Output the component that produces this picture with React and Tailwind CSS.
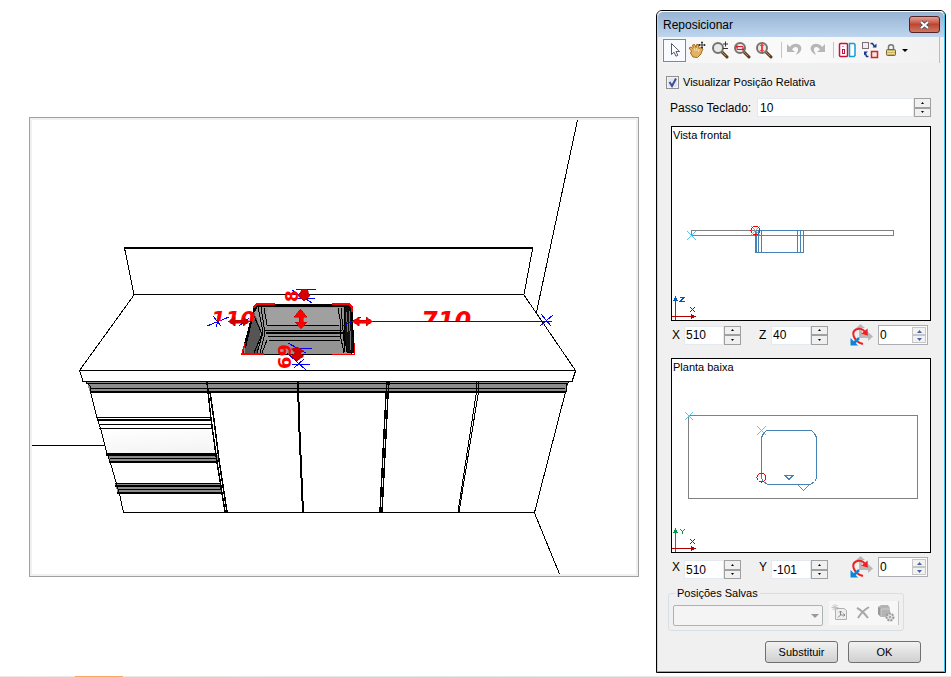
import { useState } from "react";

const Icon = ({ children }) => (
  <svg width="18" height="18" viewBox="0 0 18 18" fill="none" aria-hidden="true">
    {children}
  </svg>
);

const Lens = ({ children }) => (
  <Icon>
    <path d="M11 11l5 5" stroke="#5b3d22" strokeWidth="3" strokeLinecap="round" />
    <path d="M11 11l4 4" stroke="#a98a63" strokeWidth="1" />
    <circle cx="7" cy="7" r="5" fill="#e4eaea" stroke="#77736c" strokeWidth="2" />
    {children}
  </Icon>
);

const tools = [
  {
    name: "Mover",
    icon: (
      <Lens>
        <path d="M12 3h5M14.500 0.500v5M12 7.500h5" stroke="#333" />
      </Lens>
    ),
  },
  {
    name: "Zoom janela",
    icon: (
      <Lens>
        <path d="M4 5.500h6v3H4z" fill="#f3d5d5" stroke="#d02030" />
        <path d="M3 5.500h2M9 8.500h2" stroke="#d02030" strokeWidth="2" />
      </Lens>
    ),
  },
  {
    name: "Zoom total",
    icon: (
      <Lens>
        <path d="M7 2.500l2.500 2.500H8v4h1.500L7 11.500 4.500 9H6V5H4.500z" fill="#f04040" />
      </Lens>
    ),
  },
];

const ToolButton = ({ name, children }) => (
  <button aria-label={name} className="flex h-[23px] w-[22px] items-center justify-center">
    {children}
  </button>
);

const Separator = () => <span className="h-4 w-px bg-[#c4c4c4]" />;

const Toolbar = () => (
  <div className="mx-1 flex h-[26px] items-center border-r border-[#bdbdbd] bg-linear-to-r from-[#f5f5f5] via-[#fafafa] to-[#f1f1f1] pl-px">
    <button
      aria-label="Selecionar"
      className="flex h-[23px] w-[23px] items-center justify-center border border-[#3399ff] bg-[#f8fbff]"
    >
      <Icon>
        <path
          d="M5.500 2.500v11l2.600-2.300 1.800 4 1.900-.9-1.800-3.800h3.600z"
          fill="#fff"
          stroke="#5a5a68"
        />
      </Icon>
    </button>
    <ToolButton name="Arrastar">
      <Icon>
        <path
          d="M1 7l2-1 2.500 2-1-4L6.500 3.500 8 6.500l.5-3 2 0 .5 4 2-1L15 8l-1.500 3-.5 2-3.500 3.500-4.500-.5L2.500 12l1-2z"
          fill="#e3b365"
          stroke="#a36d20"
        />
        <path d="M5.500 7l2 3M8.500 7l.5 3M11 8l-.5 3" stroke="#f8dda8" />
        <path d="M14 .5v7M10.500 4h7M13 1.500h2M13 6.500h2M11.500 3v2M16.500 3v2" stroke="#333" />
      </Icon>
    </ToolButton>
    <div className="ml-px flex items-center">
      {tools.map((tool) => (
        <ToolButton key={tool.name} name={tool.name}>
          {tool.icon}
        </ToolButton>
      ))}
    </div>
    <div className="ml-1.5 flex items-center">
      <Separator />
      <span className="w-px" />
      <ToolButton name="Desfazer">
        <Icon>
          <path d="M2 3v8h8L7 8.500C10 4 14 6 13 9.500L11 14c6-3 7-8 3-10.500C11 2 7 3 4.800 6z" fill="#b7b7b7" />
        </Icon>
      </ToolButton>
      <span className="w-0.5" />
      <ToolButton name="Refazer">
        <Icon>
          <path d="M16 3v8H8l3-2.500C8 4 4 6 5 9.500L7 14C1 11 0 6 4 3.500 7 2 11 3 13.200 6z" fill="#b7b7b7" />
        </Icon>
      </ToolButton>
    </div>
    <div className="ml-1 flex items-center">
      <Separator />
      <span className="w-0.5" />
      <ToolButton name="Espelhar">
        <Icon>
          <rect x="1.500" y="2.500" width="8" height="13" rx="1" fill="#fff" stroke="#c8103e" strokeWidth="1.500" />
          <path d="M5 5v1M5 13v0" stroke="#c8103e" />
          <rect x="4.500" y="8.500" width="2" height="4" stroke="#c8103e" />
          <path d="M11.500 2.500H16l1 1v11l-1 1h-4.500z" fill="#fff" stroke="#159bd7" strokeWidth="1.500" />
        </Icon>
      </ToolButton>
      <span className="w-px" />
      <ToolButton name="Trocar">
        <Icon>
          <rect x="1.500" y="1.500" width="6" height="6" fill="#eee" stroke="#7b6e75" />
          <rect x="10.500" y="10.500" width="6" height="6" fill="#f4e8e8" stroke="#e02020" strokeWidth="1.500" />
          <path d="M9.500 2.500h2l2 3M7.500 15.500h-2l-1-3" stroke="#173a8c" strokeWidth="1.500" />
          <path d="M11.500 6.500h4v-4zM3 14.500v-4h4z" fill="#173a8c" />
        </Icon>
      </ToolButton>
      <span className="w-px" />
      <button aria-label="Bloquear" className="flex h-[23px] items-center gap-0.5">
        <Icon>
          <path d="M6.500 9V6c0-3 5-3 5 0v3" stroke="#777" strokeWidth="1.500" />
          <rect x="4.500" y="8.500" width="9" height="6" rx="1" fill="#c8b46a" stroke="#776a3a" />
          <path d="M5 10.500h8M5 12.500h8" stroke="#e8dba5" />
        </Icon>
        <span className="border-x-[3px] border-t-[3px] border-x-transparent border-t-black" />
      </button>
    </div>
  </div>
);

const Arrow = ({ down, blue }) => (
  <svg
    width={blue ? 5 : 3}
    height={blue ? 3 : 2}
    viewBox="0 0 5 3"
    preserveAspectRatio="none"
    aria-hidden="true"
  >
    <path d={down ? "M0 0h5L2.500 3z" : "M0 3h5L2.500 0z"} fill={blue ? "#4a62a8" : "#000"} />
  </svg>
);

const NumberField = ({ label, value, className, inputClass }) => {
  const [text, setText] = useState(value);
  const step = (delta) => setText(String(Number(text) + delta));

  return (
    <div className={`flex h-[19px] ${className}`}>
      <input
        aria-label={label}
        value={text}
        onChange={(e) => setText(e.target.value)}
        className={`min-w-0 flex-1 border border-[#e3e9ef] bg-white text-[12px] outline-none ${inputClass}`}
      />
      <div className="flex w-[17px] shrink-0 flex-col">
        <button
          aria-label={`Aumentar ${label}`}
          onClick={() => step(1)}
          className="flex flex-1 items-center justify-center border border-[#a0a0a0] bg-[#f0f0f0]"
        >
          <Arrow />
        </button>
        <button
          aria-label={`Diminuir ${label}`}
          onClick={() => step(-1)}
          className="flex flex-1 items-center justify-center border border-[#a0a0a0] bg-[#f0f0f0]"
        >
          <Arrow down />
        </button>
      </div>
    </div>
  );
};

const RotationField = ({ label }) => {
  const [text, setText] = useState("0");
  const step = (delta) => setText(String(Number(text) + delta));

  return (
    <div className="flex items-center gap-1">
      <svg width="24" height="22" viewBox="0 0 24 22" aria-hidden="true">
        <path d="M9 4h-3l4.500-4L15 4h-3v7h6V8l5 4.500-5 4.500v-3h-9z" fill="#b9b9b9" />
        <path d="M13 20C3 17 1 8 6 5.500c3-1.500 7-1 9 2.500" fill="none" stroke="#ee2222" strokeWidth="2" />
        <path d="M17.500 4.500l.5 7-7-1.500z" fill="#ee2222" />
        <path d="M9 14l-5 5" stroke="#0a86d8" strokeWidth="2.500" />
        <path d="M.5 14v7.500H8z" fill="#0a86d8" />
      </svg>
      <div className="flex h-5 w-[50px] border border-[#abadb3] bg-white p-px">
        <input
          aria-label={label}
          value={text}
          onChange={(e) => setText(e.target.value)}
          className="min-w-0 flex-1 bg-white text-[12px] leading-4 outline-none"
        />
        <div className="flex w-[14px] flex-col">
          <button
            aria-label={`Aumentar ${label}`}
            onClick={() => step(1)}
            className="flex flex-1 items-center justify-center border border-[#c6c6c6] bg-[#f2f2f2]"
          >
            <Arrow blue />
          </button>
          <button
            aria-label={`Diminuir ${label}`}
            onClick={() => step(-1)}
            className="flex flex-1 items-center justify-center border border-[#c6c6c6] bg-[#f2f2f2]"
          >
            <Arrow down blue />
          </button>
        </div>
      </div>
    </div>
  );
};

const FrontView = () => (
  <svg viewBox="672 143 258 177" className="block h-auto w-full" fill="none" shapeRendering="crispEdges">
    <rect x="691.500" y="230.500" width="202" height="5" stroke="#808080" />
    <path d="M755.500 230.500h48v22h-48zM756.500 231v21M758.500 231v21M761.500 231v21M797.500 231v21M800.500 231v21" stroke="#4682b4" />
    <path d="M687 231l9 9M696 231l-9 9M751 226l9 9M760 226l-9 9" stroke="#5bc5ee" />
    <circle cx="755.500" cy="230.500" r="4.500" stroke="#f00" />
    <path d="M675.500 320v-21" stroke="#0057b7" />
    <path d="M673 301h5l-2.500-5z" fill="#0057b7" />
    <path d="M680 297.500h4l-4 4h5" stroke="#0057b7" />
    <path d="M672 316.500h20" stroke="#b00000" />
    <path d="M691 314v5l5-2.500z" fill="#b00000" />
    <path d="M690 307l5 5M695 307l-5 5" stroke="#b00000" />
  </svg>
);

const PlanView = () => (
  <svg viewBox="672 375 258 177" className="block h-auto w-full" fill="none" shapeRendering="crispEdges">
    <rect x="688.500" y="415.500" width="229" height="83" stroke="#808080" />
    <path d="M798 485l5.500 5.500L809 485" stroke="#808080" />
    <path
      d="M766.500 430.500H811.500L814.500 433.500 816.500 437.500V478.500L814.500 481.500 810.500 484.500H767.500L763.500 481.500 761.500 478.500V437.500L763.500 433.500z"
      stroke="#4682b4"
    />
    <path d="M785 475.500h8l-4 4z" stroke="#4682b4" />
    <path d="M685 412l8 8M693 412l-8 8M757 426l9 9M766 426l-9 9" stroke="#5bc5ee" />
    <circle cx="761.500" cy="477.500" r="4.500" stroke="#f00" />
    <path d="M675.500 552v-20" stroke="#009640" />
    <path d="M673 533h5l-2.500-5z" fill="#009640" />
    <path d="M680 529l2.500 2.500L685 529M682.500 531v3" stroke="#009640" />
    <path d="M672 548.500h20" stroke="#b00000" />
    <path d="M691 546v5l5-2.500z" fill="#b00000" />
    <path d="M690 539l5 5M695 539l-5 5" stroke="#b00000" />
  </svg>
);

const Kitchen = () => (
  <svg
    viewBox="32 120 604 454"
    className="block h-auto w-full font-['DejaVu_Sans',sans-serif] font-bold"
    fill="none"
    stroke="#000"
    shapeRendering="crispEdges"
  >
    <defs>
      <clipPath id="aboveLine">
        <rect x="200" y="305" width="300" height="16" />
      </clipPath>
      <linearGradient id="drawer" x1="0" y1="0" x2="0.300" y2="1">
        <stop offset="0" stopColor="#fff" />
        <stop offset="1" stopColor="#f5f5f5" />
      </linearGradient>
    </defs>

    {/* walls */}
    <path d="M577.500 120L536.500 312M32 445.500H105M534.500 513L559.500 574" />
    {/* backsplash and worktop */}
    <path d="M124 248H533" strokeWidth="2" />
    <path d="M124.500 248L134 294.500H524L532.500 249M134 295L79.500 370.500H575.500L524 295" />
    <path d="M79.500 370.500L83 381.500H572L575.500 371" />

    {/* profile under the worktop */}
    <path d="M87 382H569L565 393H90z" fill="#8c8c8c" stroke="none" />
    <path d="M86 383.500H568M90 388.500H565M86 382L90 386V392M569 382L566 386V392" />
    <path d="M90 392H566" strokeWidth="2" />

    {/* drawers */}
    <path d="M101 429H213L217 453H107z" fill="url(#drawer)" stroke="none" />
    <path d="M108 455h110v7h-109zM115 484h106l1 9h-104z" fill="#8c8c8c" stroke="none" />
    <path d="M90.500 392L97.500 420 100.500 428 106.500 452 110.500 463 116.500 484 119.500 494 123.500 512.500H534.500L565.500 392" />
    <path d="M97 417.500H210M100 424.500H212M99 428.500H212M110 458.500H217M115 483.500H220M119 489.500H221" />
    <path d="M97 420H211M109 462H217M115 486H220M117 493H222" strokeWidth="2" />
    <path d="M106 454H216" strokeWidth="3" />

    {/* gaps between the doors */}
    <path d="M207 382L211 419 217 462 225 512M210 392L214 420 219 460 227 512" strokeWidth="1.500" />
    <path d="M298 382L299 420 303 512" strokeWidth="2" />
    <path d="M387 382L386 395 380 512M389 382L388 395 382 512" strokeWidth="1.500" />
    <path d="M477 382L476 395 458 512M479 382L478 395 459 512" />

    {/* sink */}
    <path d="M258 304H347L352 309 354 350 351 354H244L243 350 254 308z" fill="#949494" />
    <path d="M268 308H337L340 325H265z" fill="#a0a0a0" stroke="none" />
    <path d="M254 312L261 330 257 353H245L245 347z" fill="#555" stroke="none" />
    <path d="M345 306L351 308 354 352H347L344 335z" fill="#111" />
    <path d="M257 305.500H350" strokeWidth="3" />
    <path d="M257 306L253 313 245 348" strokeWidth="2" />
    <path d="M258 307L263 332 257 353M261 307L265 333 260 353M264 308L267 325M254 316L262 334 254 353M267 340L262 353" />
    <path d="M267 325.500H339M265 330.500H342M268 336.500H341M269 340.500H340" />
    <path d="M266 333H343" strokeWidth="2" />
    <path d="M341 308L343 330 345 352M338 308L341 325 340 334 344 353" />
    <path d="M346 312L348 332M349 311L351 350" stroke="#777" />

    <path
      d="M253 308L257 304H275M332 304H349L352 307V312M245 343L242 354H264M332 354.500H354.500V343"
      stroke="#f00"
      strokeWidth="1.500"
    />

    {/* dimension lines */}
    <path
      d="M352 321.500H552M540 326L553 315M541 314L551 326M207 326L229 317M213 316L221 326M219 317L216 327M239 326L249 318M343 326L361 317M296 289.500H316M293 298.500H315M292 290L312 303M288 343L306 353M293 348.500H312M292 364.500H310M287 353L306 370M294 368L304 359"
      stroke="#00f"
    />

    <g fill="#f00" stroke="none">
      <g clipPath="url(#aboveLine)">
        <text x="421" y="329" fontSize="24" fontStyle="italic">710</text>
        <text x="211" y="327" fontSize="21" fontStyle="italic">110</text>
      </g>
      <text fontSize="17" transform="translate(298 302) rotate(-90)">8</text>
      <text fontSize="18" transform="translate(291 369) rotate(-90)">69</text>
    </g>

    {/* move handles */}
    <g fill="#f00" stroke="#b00000" strokeWidth="0.500">
      <path d="M300.500 309L307 317H303V322H307L301 329 295 322H299V317H294z" />
      <path d="M352 321.500L359 317V320H366V317L373 321.500 366 326V323H359V326z" />
      <path d="M228 321.500L235 317V320H243V317L250 321.500 243 326V323H235V326z" fill="#d40000" />
      <path d="M302 289H307L310 296 304 301 298 296z" fill="#d40000" />
      <path d="M291 349L297 347 304 351 300 353 304 356 297 361 291 356 295 353z" fill="#d40000" />
    </g>
  </svg>
);

const Dialog = () => {
  const [relative, setRelative] = useState(true);

  return (
    <section
      aria-label="Reposicionar"
      className="mt-2.5 mr-[5px] w-[290px] shrink-0 rounded-t-md border border-black bg-[#f0f0f0] text-[12px] leading-4 text-black"
    >
      <div className="rounded-t-[5px] border border-t-white border-r-[#39c5f0] border-b-[#39c5f0] border-l-[#b9d8ef] pb-2">
        <header className="flex h-[25px] items-center justify-between rounded-t-[5px] bg-linear-to-b from-[#98b4d3] to-[#bdd5ee] pr-1 pl-[5px]">
          <h1>Reposicionar</h1>
          <button
            aria-label="Fechar"
            className="flex h-[17px] w-[31px] items-center justify-center rounded-[3px] border border-[#542328] bg-linear-to-b from-[#e4a092] via-[#bd4634] to-[#cf7860]"
          >
            <svg width="13" height="10" viewBox="0 0 13 10" aria-hidden="true">
              <path d="M3 2l7 6M10 2L3 8" stroke="#53545e" strokeWidth="4" />
              <path d="M3 2l7 6M10 2L3 8" stroke="#fff" strokeWidth="2" />
            </svg>
          </button>
        </header>

        <Toolbar />

        <div className="px-[13px]">
          <label className="mt-[11px] -ml-[5px] flex items-center gap-1 text-[11px]">
            <span className="relative flex">
              <input
                type="checkbox"
                checked={relative}
                onChange={() => setRelative(!relative)}
                className="h-[13px] w-[13px] appearance-none border border-[#8e8f8f] bg-[#e3e7ec] ring-1 ring-[#f4f4f4] ring-inset"
              />
              {relative && (
                <svg
                  className="pointer-events-none absolute inset-0"
                  width="13"
                  height="13"
                  viewBox="0 0 13 13"
                  fill="none"
                  aria-hidden="true"
                >
                  <path d="M3.500 6l2.500 4 4-7.500" stroke="#3c4f98" strokeWidth="2" />
                </svg>
              )}
            </span>
            Visualizar Posição Relativa
          </label>

          <div className="mt-2 -ml-px flex items-center justify-between">
            <span>Passo Teclado:</span>
            <NumberField label="Passo Teclado" value="10" className="w-[174px]" inputClass="pl-0.5" />
          </div>

          <div className="mt-[9px] border border-black bg-white">
            <p className="pl-px text-[11px]">Vista frontal</p>
            <FrontView />
          </div>

          <div className="mt-1 flex h-5 items-center pr-[3px] pl-px">
            <span className="w-3">X</span>
            <NumberField label="X frontal" value="510" className="w-[57px]" inputClass="pl-px" />
            <span className="ml-[18px] w-3">Z</span>
            <NumberField label="Z frontal" value="40" className="w-[57px]" inputClass="pl-px" />
            <div className="ml-auto">
              <RotationField label="Rotação frontal" />
            </div>
          </div>

          <div className="mt-[13px] border border-black bg-white">
            <p className="pl-px text-[11px]">Planta baixa</p>
            <PlanView />
          </div>

          <div className="mt-1 flex h-5 items-start pr-[3px] pl-px">
            <span className="w-3 pt-0.5">X</span>
            <NumberField label="X planta" value="510" className="mt-[3px] w-[57px]" inputClass="pl-px" />
            <span className="ml-[18px] w-3 pt-0.5">Y</span>
            <NumberField label="Y planta" value="-101" className="mt-[3px] w-[57px]" inputClass="pl-px" />
            <div className="-mt-px ml-auto">
              <RotationField label="Rotação planta" />
            </div>
          </div>

          <fieldset className="mt-2 -ml-[3px] flex h-[46px] w-[236px] items-start rounded-[3px] border border-[#d5dfe5] px-1">
            <legend className="ml-0.5 px-0.5 text-[11px]">Posições Salvas</legend>
            <div className="relative mt-1">
              <select
                disabled
                aria-label="Posições Salvas"
                className="h-[21px] w-[150px] appearance-none rounded-[2px] border border-[#adb2b5] bg-[#f4f4f4]"
              />
              <span className="pointer-events-none absolute top-[9px] right-1 border-x-4 border-t-4 border-x-transparent border-t-[#9a9a9a]" />
            </div>
            <div className="ml-1.5 flex h-6 items-center border-r border-[#c4c4c4] bg-[#f7f7f7]">
              <button aria-label="Salvar posição" className="w-[23px] pl-0.5">
                <Icon>
                  <path d="M4.500 4.500H13l2.500 2V15.500h-11z" fill="#eee" stroke="#b0b0b0" />
                  <path d="M4 0v7M.5 3.500h7M1.500 1l5 5M6.500 1l-5 5" stroke="#c4c4c4" />
                  <path d="M9.500 7v4L7 13.500M9.500 11H14M8 8.500l1.500-1.500L11 8.500M12.500 9.500L14 11l-1.500 1.500" stroke="#888" />
                </Icon>
              </button>
              <button aria-label="Excluir posição" className="w-[23px] pl-0.5">
                <Icon>
                  <path d="M3 4c4 2 8 6 11 10M15 3C10 6 7 9 4 14" stroke="#a8a8a8" strokeWidth="2" />
                </Icon>
              </button>
              <button aria-label="Configurar posição" className="w-[23px] pl-0.5">
                <Icon>
                  <path d="M1 3l3-2h7l2 3v9H4l-3-3z" fill="#b4b4b4" />
                  <path d="M1 3l3 2v8l-3-3z" fill="#979797" />
                  <path d="M4 13V5h9" stroke="#cfcfcf" />
                  <circle cx="13" cy="13" r="3.500" fill="#ddd" stroke="#999" strokeWidth="2" strokeDasharray="2 1" />
                  <circle cx="13" cy="13" r="1" fill="#999" />
                </Icon>
              </button>
            </div>
          </fieldset>

          <div className="mt-2.5 flex justify-end gap-2.5 pr-2.5">
            <button className="h-[22px] w-[73px] rounded-[3px] border border-[#707070] bg-linear-to-b from-[#f2f2f2] to-[#d0d0d0] text-[11px]">
              Substituir
            </button>
            <button className="h-[22px] w-[73px] rounded-[3px] border border-[#707070] bg-linear-to-b from-[#f2f2f2] to-[#d0d0d0] text-[11px]">
              OK
            </button>
          </div>
        </div>
      </div>
    </section>
  );
};

const App = () => {
  return (
    <div className="flex min-h-screen flex-col bg-white font-['Liberation_Sans',Arial,sans-serif]">
      <div className="flex flex-1 items-start">
        <main className="min-w-0 flex-1 pt-[117px] pr-[17px] pl-[29px]">
          <div className="border border-[#a0a0a0] bg-[#f0f0f0] p-0.5">
            <div className="bg-white">
              <Kitchen />
            </div>
          </div>
        </main>
        <Dialog />
      </div>
      <footer className="flex h-px bg-linear-to-r from-[#f3e6e0] via-[#dfeae8] to-[#f3e6e0] pl-[75px]">
        <div className="w-12 bg-[#f9a763]" />
      </footer>
    </div>
  );
};

export default App;
